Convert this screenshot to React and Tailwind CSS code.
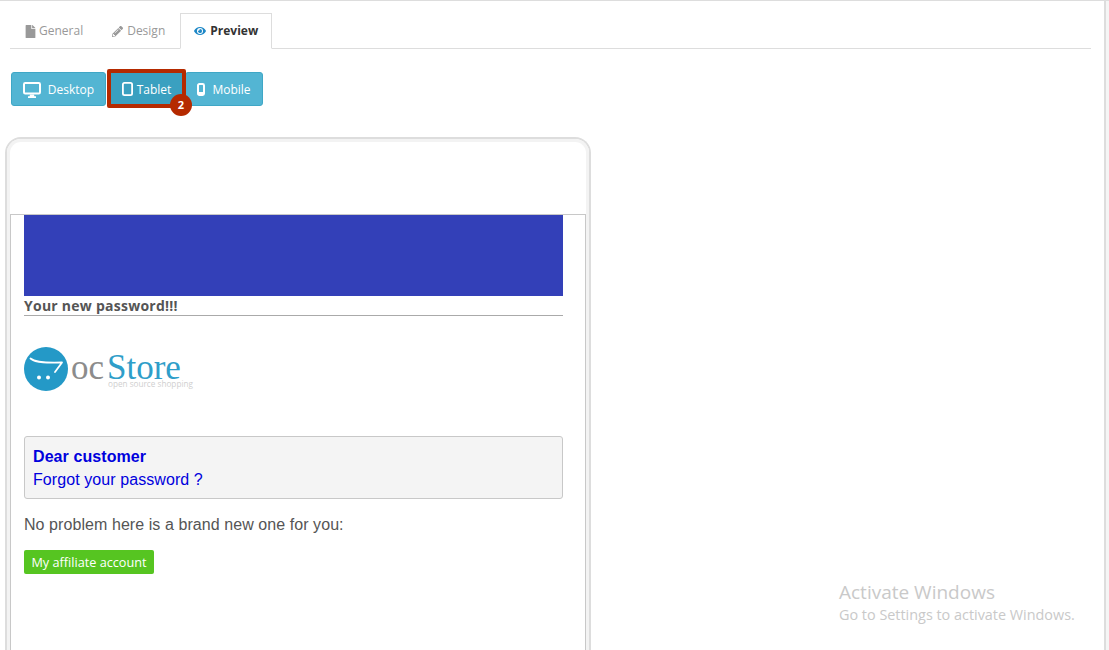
import { FaFile, FaPencilAlt, FaEye } from 'react-icons/fa';

const openSans = { fontFamily: '"Open Sans", sans-serif' };
const arial = { fontFamily: '"Liberation Sans", sans-serif' };

function DesktopIcon() {
  return (
    <svg width="18" height="16" viewBox="0 0 18 16" className="shrink-0">
      <rect x="1" y="1" width="16" height="10.5" rx="1.2" fill="none" stroke="#ffffff" strokeWidth="2" />
      <path d="M7 12.5h4l.4 1.8h1.6V16H5v-1.7h1.6z" fill="#ffffff" />
    </svg>
  );
}

function TabletIcon() {
  return (
    <svg width="11" height="14" viewBox="0 0 11 14" className="shrink-0">
      <rect x="0.9" y="0.9" width="9.2" height="12.2" rx="1.6" fill="none" stroke="#ffffff" strokeWidth="1.8" />
    </svg>
  );
}

function MobileIcon() {
  return (
    <svg width="8" height="13" viewBox="0 0 8 13" className="shrink-0">
      <rect x="1" y="1" width="6" height="11" rx="1.4" fill="none" stroke="#ffffff" strokeWidth="2" />
      <rect x="2" y="9" width="4" height="2" fill="#ffffff" />
    </svg>
  );
}

function Tab({ icon, label, active }) {
  if (active) {
    return (
      <div className="flex items-center gap-[4px] h-[36px] w-[92px] justify-center bg-white border border-[#dddddd] border-b-white -mb-px text-[12px] font-bold text-[#333333]">
        {icon}
        {label}
      </div>
    );
  }
  return (
    <div className="flex items-center gap-[4px] h-[36px] px-[14px] text-[12px] text-[#999999]">
      {icon}
      {label}
    </div>
  );
}

function DeviceButton({ icon, label, className }) {
  return (
    <div className={`flex items-center justify-center h-[34px] pt-[1px] bg-[#53b5d3] border border-[#3fa7c6] rounded-[3px] text-[12px] text-white ${className}`}>
      {icon}
      {label}
    </div>
  );
}

function OcStoreLogo() {
  return (
    <div className="flex items-start h-[44px]">
      <svg width="44" height="44" viewBox="0 0 44 44" className="shrink-0">
        <circle cx="22" cy="22" r="22" fill="#2499c7" />
        <path d="M6.5 11.5 C12 16 24 16 38 15.5 L31 25" fill="none" stroke="#ffffff" strokeWidth="1.8" strokeLinecap="round" strokeLinejoin="round" />
        <circle cx="15" cy="30.5" r="2" fill="#ffffff" />
        <circle cx="24" cy="30.5" r="2" fill="#ffffff" />
      </svg>
      <div className="relative ml-[3px] h-[44px] w-[125px]" style={{ fontFamily: '"Liberation Serif", serif' }}>
        <span className="absolute left-0 top-[11px] text-[35px] leading-[20px] text-[#8c8c8c]">oc</span>
        <span className="absolute left-[36px] top-[11px] text-[35px] leading-[20px] text-[#2f9ec9]">Store</span>
        <span className="absolute left-[37px] top-[32px] text-[8.2px] leading-[10px] whitespace-nowrap text-[#cfcfcf]" style={openSans}>open source shopping</span>
      </div>
    </div>
  );
}

export default function App() {
  return (
    <div className="relative flex h-[650px] w-[1109px] overflow-hidden bg-white border-t border-[#dddddd]" style={openSans}>
      <main className="w-[1104px] shrink-0 pt-[12px]">
        {/* TABS */}
        <div className="flex gap-[1px] ml-[10px] w-[1081px] h-[36px] border-b border-[#dddddd]">
          <Tab icon={<FaFile size={13} className="text-[#999999] -mr-[2px]" />} label="General" />
          <Tab icon={<FaPencilAlt size={11} className="text-[#999999]" />} label="Design" />
          <Tab active icon={<FaEye size={12} className="text-[#1e88c7]" />} label="Preview" />
        </div>

        {/* DEVICE BUTTONS */}
        <div className="flex items-center ml-[11px] mt-[23px] h-[34px]">
          <DeviceButton className="w-[95px] gap-[7px]" icon={<DesktopIcon />} label="Desktop" />
          <div className="relative ml-[1px] h-[39px] w-[79px] mt-[-1px] flex items-center justify-center gap-[4px] rounded-[2px] border-[4px] border-[#b52a00] bg-[#3aa0c0] text-[12px] text-white">
            <TabletIcon />
            <span className="pt-[2px]">Tablet</span>
            <span className="absolute left-[59px] top-[21px] flex items-center justify-center h-[22px] w-[22px] rounded-full bg-[#b52a00] text-[11px] font-bold text-white">2</span>
          </div>
          <DeviceButton className="w-[78px] gap-[7px] ml-[-1px]" icon={<MobileIcon />} label="Mobile" />
        </div>

        {/* TABLET FRAME */}
        <div className="ml-[5px] mt-[31px] w-[586px] h-[540px] rounded-t-[16px] border-x-[2px] border-t-[2px] border-[#dddddd]">
          <div className="h-full rounded-t-[14px] border-x-[3px] border-t-[3px] border-[#f3f3f3]">
            <div className="h-[72px]" />
            <div className="h-full border-x border-t border-[#c8c8c8] pl-[13px]">
              <div className="w-[539px]">
                <div className="h-[81px] bg-[#3340b8]" />
                <div className="h-[20px] border-b border-[#aaaaaa] text-[14px] font-bold leading-[20px] tracking-[0.25px] text-[#555555]">Your new password!!!</div>
                <div className="mt-[31px]">
                  <OcStoreLogo />
                </div>
                <div className="mt-[45px] h-[63px] rounded-[3px] border border-[#c8c8c8] bg-[#f4f4f4] px-[8px] pt-[8px] text-[16px] leading-[23px] tracking-[0.08px] text-[#0000dd]" style={arial}>
                  <div className="font-bold">Dear customer</div>
                  <div>Forgot your password ?</div>
                </div>
                <p className="mt-[16px] text-[16px] leading-[20px] tracking-[0.07px] text-[#555555]" style={arial}>No problem here is a brand new one for you:</p>
                <div className="mt-[15px] flex items-center justify-center h-[24px] w-[130px] pt-[1px] rounded-[2px] bg-[#56c521] text-[12.7px] text-white">My affiliate account</div>
              </div>
            </div>
          </div>
        </div>
      </main>

      {/* SCROLLBAR TRACK */}
      <div className="flex-1 bg-[#f5f5f5] border-l-[2px] border-[#dddddd]" />

      {/* WATERMARK */}
      <div className="absolute left-[839px] top-[578px] text-[#c9c9c9]">
        <div className="text-[19px] leading-[26px]">Activate Windows</div>
        <div className="text-[14.4px] leading-[20px]">Go to Settings to activate Windows.</div>
      </div>
    </div>
  );
}
